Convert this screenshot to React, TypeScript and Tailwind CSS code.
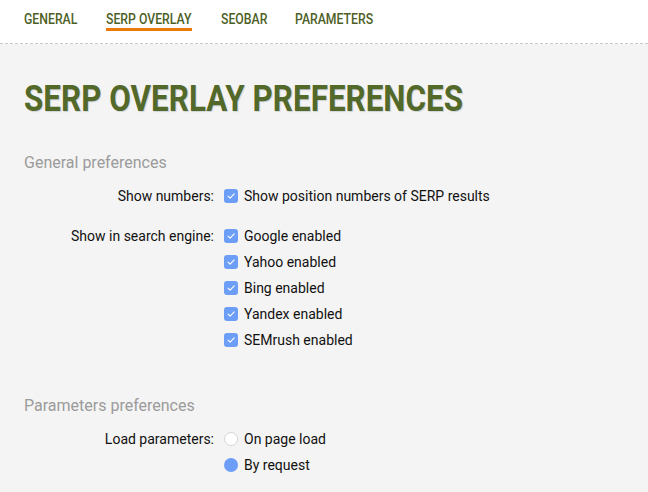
import React from 'react'

const tabs = [
  { name: 'GENERAL', w: 'w-[53px]' },
  { name: 'SERP OVERLAY', w: 'w-[86px]' },
  { name: 'SEOBAR', w: 'w-[45px]' },
  { name: 'PARAMETERS', w: 'w-[76px]' },
]

function Check() {
  return (
    <span className="flex h-[14px] w-[14px] shrink-0 items-center justify-center rounded-[3px] bg-[#6c9ef8]">
      <svg width="10" height="10" viewBox="0 0 10 10" fill="none">
        <path d="M2 5.2 L4.1 7.2 L8.2 2.8" stroke="white" strokeWidth="1.1" strokeLinecap="round" strokeLinejoin="round" />
      </svg>
    </span>
  )
}

function Radio({ on }: { on?: boolean }) {
  return on ? (
    <span className="block h-[14px] w-[14px] shrink-0 rounded-full bg-[#6c9ef8]" />
  ) : (
    <span className="block h-[14px] w-[14px] shrink-0 rounded-full border border-[#d6d6d6] bg-white" />
  )
}

function Row({ label, children }: { label?: string; children: React.ReactNode }) {
  return (
    <div className="flex h-[26px] items-center">
      <div className="w-[190px] shrink-0 text-right">{label}</div>
      <div className="ml-[10px] flex items-center gap-[6px]">{children}</div>
    </div>
  )
}

export default function App() {
  return (
    <div className="min-h-screen bg-[#f4f4f4] text-[14px] leading-5 text-[#111]" style={{ fontFamily: 'Roboto, "Liberation Sans", sans-serif' }}>
      <div className="h-[44px] border-b border-dashed border-[#c8c8c8] bg-white px-6 pt-[9px]">
        <div className="flex gap-[29px]">
          {tabs.map((t, i) => (
            <div key={t.name} className={`relative ${t.w}`}>
              <span className="inline-block origin-left scale-x-[0.875] whitespace-nowrap font-medium text-[#4d5f26]">{t.name}</span>
              {i === 1 && <div className="absolute left-0 right-0 top-[19px] h-[3px] bg-[#ec7a08]" />}
            </div>
          ))}
        </div>
      </div>

      <div className="px-6">
        <h1 className="mt-[37px] text-[36px] font-bold leading-9 whitespace-nowrap text-[#53692a]">
          <span className="inline-block origin-left scale-x-[0.873] [text-shadow:1px_1px_1px_rgba(80,90,130,0.22)]">SERP OVERLAY PREFERENCES</span>
        </h1>

        <h2 className="mt-[34px] text-[16px] leading-6 text-[#9b9b9b]">General preferences</h2>
        <div className="mt-[8px]">
          <Row label="Show numbers:">
            <Check />
            <span>Show position numbers of SERP results</span>
          </Row>
        </div>
        <div className="mt-[14px]">
          <Row label="Show in search engine:">
            <Check />
            <span>Google enabled</span>
          </Row>
          <Row>
            <Check />
            <span>Yahoo enabled</span>
          </Row>
          <Row>
            <Check />
            <span>Bing enabled</span>
          </Row>
          <Row>
            <Check />
            <span>Yandex enabled</span>
          </Row>
          <Row>
            <Check />
            <span>SEMrush enabled</span>
          </Row>
        </div>

        <h2 className="mt-[41px] text-[16px] leading-6 text-[#9b9b9b]">Parameters preferences</h2>
        <div className="mt-[8px]">
          <Row label="Load parameters:">
            <Radio />
            <span>On page load</span>
          </Row>
          <Row>
            <Radio on />
            <span>By request</span>
          </Row>
        </div>
      </div>
    </div>
  )
}
